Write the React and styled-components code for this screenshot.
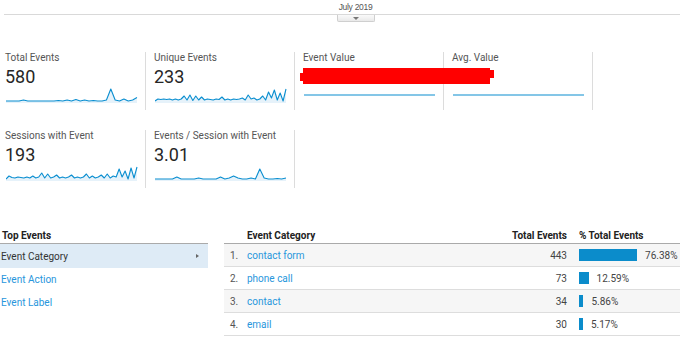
import React from "react";
import styled, { createGlobalStyle } from "styled-components";

const Global = createGlobalStyle`
  html, body { margin: 0; padding: 0; background: #fff; }
  body { font-family: Roboto, "Liberation Sans", Arial, sans-serif; color: #222; }
  * { box-sizing: border-box; }
`;

const Page = styled.div`
  width: 680px;
  height: 344px;
  overflow: hidden;
`;

const DateBar = styled.div`
  margin-left: 4px;
  padding-left: 27px;
  height: 15px;
  border-bottom: 1px solid #d9d9d9;
  display: flex;
  justify-content: center;
  align-items: center;
  font-family: "Liberation Sans Narrow", "Liberation Sans", Arial, sans-serif;
  font-size: 8.5px;
  letter-spacing: -0.3px;
  color: #555;
`;

const TabRow = styled.div`
  margin-left: 4px;
  padding-left: 27px;
  display: flex;
  justify-content: center;
`;

const Tab = styled.div`
  width: 38px;
  height: 7px;
  border: 1px solid #cfcfcf;
  border-top: none;
  border-radius: 0 0 2px 2px;
  background: linear-gradient(#fafafa, #e9e9e9);
  display: flex;
  justify-content: center;
  align-items: center;
`;

const Caret = styled.span`
  width: 0;
  height: 0;
  border-left: 3px solid transparent;
  border-right: 3px solid transparent;
  border-top: 3px solid #777;
`;

const Metrics = styled.div`
  margin-top: 30px;
  display: flex;
  flex-direction: column;
  gap: 20px;
`;

const MetricRow = styled.div`
  position: relative;
  display: flex;
  margin-left: -3px;
`;

const Card = styled.div`
  width: 149px;
  height: 58px;
  padding-left: 8px;
  border-right: 1px solid #dcdcdc;
`;

const Label = styled.div`
  font-size: 10px;
  line-height: 12px;
  color: #555;
  white-space: nowrap;
`;

const Value = styled.div`
  margin-top: 2px;
  font-size: 18px;
  line-height: 21px;
  height: 20px;
  color: #262626;
`;

const SparkSvg = styled.svg`
  display: block;
  margin-left: 1px;
`;

const Redaction = styled.div`
  position: absolute;
  left: 306px;
  top: 16px;
  width: 187px;
  height: 16px;
  background: #ff0000;
  z-index: 2;
  &::before {
    content: "";
    position: absolute;
    left: -3px;
    top: 5px;
    width: 4px;
    height: 8px;
    background: #ff0000;
  }
  &::after {
    content: "";
    position: absolute;
    right: -4px;
    top: 2px;
    width: 5px;
    height: 8px;
    background: #ff0000;
  }
`;

const Bottom = styled.div`
  margin-top: 40px;
  display: flex;
  gap: 16px;
`;

const LeftList = styled.div`
  width: 208px;
  flex: none;
`;

const HeadCell = styled.div`
  font-size: 10px;
  font-weight: 700;
  line-height: 15px;
  height: 16px;
  color: #222;
  border-bottom: 1px solid #aaa;
  padding-left: ${(p) => p.$pl || 0}px;
  text-align: ${(p) => (p.$right ? "right" : "left")};
  padding-right: ${(p) => p.$pr || 0}px;
  white-space: nowrap;
`;

const ListItem = styled.div`
  height: ${(p) => (p.$active ? 24 : 23)}px;
  display: flex;
  align-items: center;
  justify-content: space-between;
  padding: 0 9px 0 1px;
  font-size: 10px;
  color: ${(p) => (p.$active ? "#333" : "#2896dc")};
  background: ${(p) => (p.$active ? "#deebf6" : "transparent")};
`;

const Arrow = styled.span`
  width: 0;
  height: 0;
  border-top: 2.5px solid transparent;
  border-bottom: 2.5px solid transparent;
  border-left: 3px solid #666;
`;

const Table = styled.div`
  flex: 1;
  display: grid;
  grid-template-columns: 23px 1fr 90px 101px;
`;

const Cell = styled.div`
  height: 23px;
  border-bottom: 1px solid #ddd;
  background: ${(p) => (p.$odd ? "#f6f6f6" : "#fff")};
  display: flex;
  align-items: center;
  font-size: 10px;
  color: ${(p) => p.$color || "#444"};
  padding-left: ${(p) => p.$pl || 0}px;
  padding-right: ${(p) => p.$pr || 0}px;
  justify-content: ${(p) => (p.$right ? "flex-end" : "flex-start")};
  gap: ${(p) => p.$gap || 0}px;
  white-space: nowrap;
`;

const Bar = styled.span`
  display: block;
  height: 12px;
  background: #0b8ccb;
  flex: none;
`;

const BLUE = "#0a8ed0";

function Spark({ data, flat, width = 132 }) {
  const h = 18;
  const base = 16;
  if (flat) {
    return (
      <SparkSvg width={width} height={h}>
        <line x1="0" y1="9" x2={width - 1} y2="9" stroke={BLUE} strokeWidth="1.2" />
      </SparkSvg>
    );
  }
  const step = (width - 1) / (data.length - 1);
  const pts = data.map((v, i) => `${(i * step).toFixed(2)},${(base - v).toFixed(2)}`);
  const area = `0,${base + 1} ${pts.join(" ")} ${(width - 1).toFixed(2)},${base + 1}`;
  return (
    <SparkSvg width={width} height={h}>
      <polygon points={area} fill="#e6f2fa" />
      <polyline points={pts.join(" ")} fill="none" stroke={BLUE} strokeWidth="1.1" strokeLinejoin="round" />
    </SparkSvg>
  );
}

const row1 = [
  { label: "Total Events", value: "580", data: [1,1,1,1,2,1,1,1,1,1,1,1,1.5,1,2,1,2.5,1,2,1,1.5,1,1,2,13,2,1,3,1,2,4.5] },
  {
    label: "Unique Events",
    value: "233",
    data: [1,3,2.5,3,2.5,3,2,3,2,3,6,2,7,1.5,6,2,5,2,3,2.5,2,3,2.5,5,2,3,2,3,2.5,3,4,2,7,3,4,2,3,6,2,10,4,12,2,9,1,13],
  },
  { label: "Event Value", value: "", flat: true },
  { label: "Avg. Value", value: "", flat: true },
];

const row2 = [
  {
    label: "Sessions with Event",
    value: "193",
    data: [1,4,2.5,2,3,2.5,2,3,2,4,2,3,7,2,6,2,3,5,2,3,2,3,5,2,3,2,3,6,2,4,2,3,5,2,6,2,4,3,11,3,9,1,12,2,13],
  },
  { label: "Events / Session with Event", value: "3.01", data: [1,1,1,1,1,3,1,1,1,1,2,1,1,1,1,3,1,2,4,2,1,1,2,1,11,2,1,1,1.5,1,2] },
];

const rows = [
  { n: "1.", name: "contact form", total: "443", pct: 76.38 },
  { n: "2.", name: "phone call", total: "73", pct: 12.59 },
  { n: "3.", name: "contact", total: "34", pct: 5.86 },
  { n: "4.", name: "email", total: "30", pct: 5.17 },
];

function MetricCard({ m }) {
  return (
    <Card>
      <Label>{m.label}</Label>
      <Value>{m.value}</Value>
      <Spark data={m.data} flat={m.flat} />
    </Card>
  );
}

export default function App() {
  return (
    <Page>
      <Global />
      <DateBar>July 2019</DateBar>
      <TabRow>
        <Tab>
          <Caret />
        </Tab>
      </TabRow>
      <Metrics>
        <MetricRow>
          {row1.map((m) => (
            <MetricCard key={m.label} m={m} />
          ))}
          <Redaction />
        </MetricRow>
        <MetricRow>
          {row2.map((m) => (
            <MetricCard key={m.label} m={m} />
          ))}
        </MetricRow>
      </Metrics>
      <Bottom>
        <LeftList>
          <HeadCell $pl={2}>Top Events</HeadCell>
          <ListItem $active>
            <span>Event Category</span>
            <Arrow />
          </ListItem>
          <ListItem>Event Action</ListItem>
          <ListItem>Event Label</ListItem>
        </LeftList>
        <Table>
          <HeadCell />
          <HeadCell>Event Category</HeadCell>
          <HeadCell $right $pr={12}>Total Events</HeadCell>
          <HeadCell>% Total Events</HeadCell>
          {rows.map((r, i) => (
            <React.Fragment key={r.n}>
              <Cell $odd={i % 2 === 0} $pl={6} $color="#555">{r.n}</Cell>
              <Cell $odd={i % 2 === 0} $color="#2896dc">{r.name}</Cell>
              <Cell $odd={i % 2 === 0} $right $pr={12}>{r.total}</Cell>
              <Cell $odd={i % 2 === 0} $gap={8}>
                <Bar style={{ width: `${Math.max(3, r.pct * 0.76)}px` }} />
                <span>{r.pct.toFixed(2)}%</span>
              </Cell>
            </React.Fragment>
          ))}
        </Table>
      </Bottom>
    </Page>
  );
}
